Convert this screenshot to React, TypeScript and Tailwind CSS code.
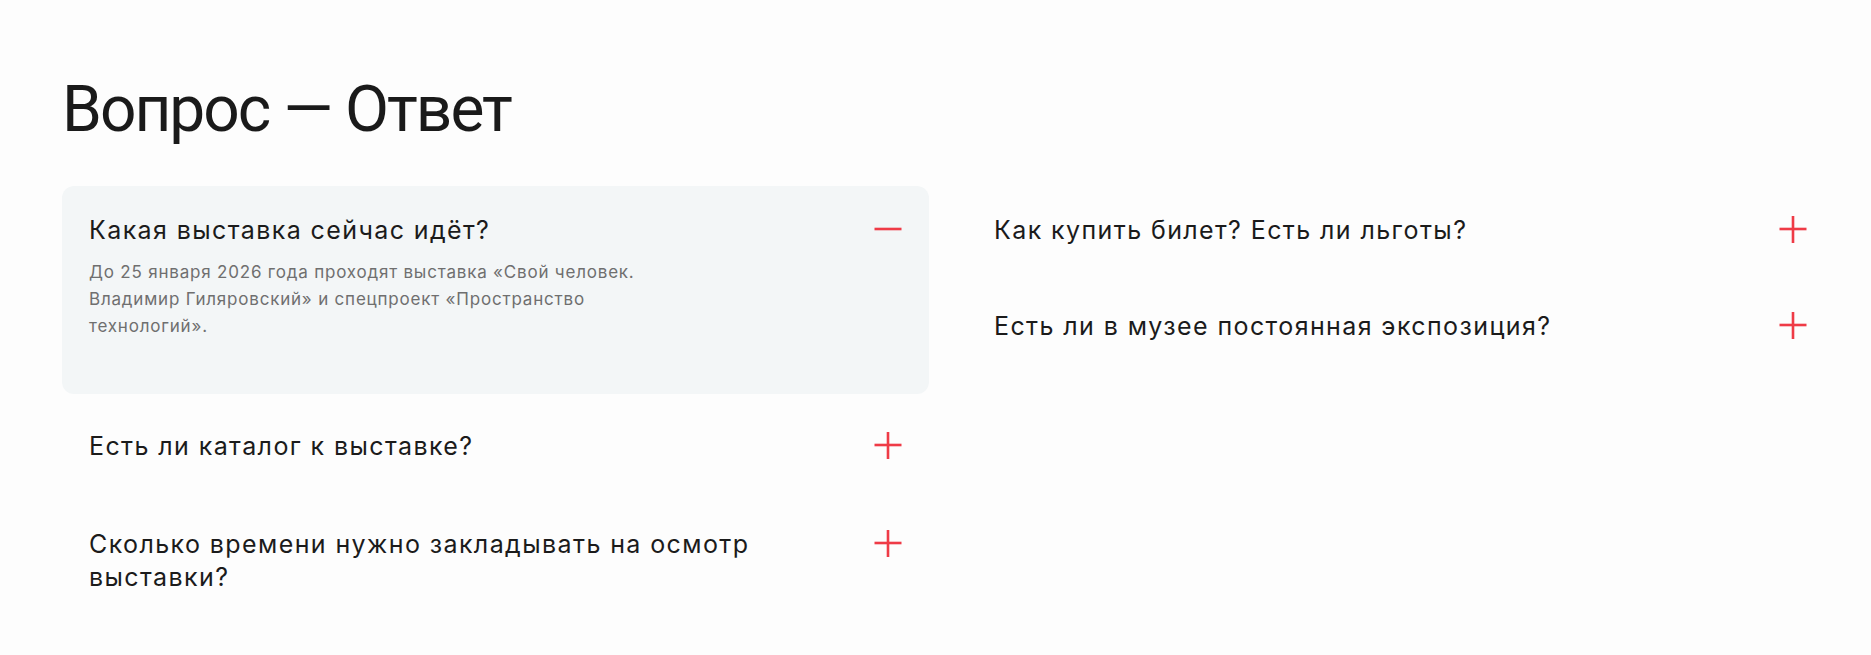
import React from "react";

type Item = { q: React.ReactNode; a?: React.ReactNode; open?: boolean };

const left: Item[] = [
  {
    q: "Какая выставка сейчас идёт?",
    a: (
      <>
        До 25 января 2026 года проходят выставка «Свой человек.
        <br />
        Владимир Гиляровский» и спецпроект «Пространство
        <br />
        технологий».
      </>
    ),
    open: true,
  },
  { q: "Есть ли каталог к выставке?" },
  {
    q: (
      <>
        Сколько времени нужно закладывать на осмотр
        <br />
        выставки?
      </>
    ),
  },
];

const right: Item[] = [
  { q: "Как купить билет? Есть ли льготы?" },
  { q: "Есть ли в музее постоянная экспозиция?" },
];

function Icon({ open }: { open?: boolean }) {
  return (
    <svg width="28" height="28" viewBox="0 0 28 28" className="shrink-0 mt-[2px]">
      <line x1="0.5" y1="13" x2="27.5" y2="13" stroke="#ef3b46" strokeWidth="2.6" />
      {!open && <line x1="14" y1="0" x2="14" y2="27" stroke="#ef3b46" strokeWidth="2.6" />}
    </svg>
  );
}

function FaqItem({ item }: { item: Item }) {
  return (
    <div
      className={
        "rounded-[12px] px-[27px] pt-[28px] " +
        (item.open ? "bg-[#f3f6f7] pb-[54px]" : "pb-[29px]")
      }
    >
      <div className="flex items-start justify-between gap-6">
        <div className="text-[25px] leading-[33px] text-[#1b1b1b] tracking-[1.4px]">{item.q}</div>
        <Icon open={item.open} />
      </div>
      {item.a && (
        <div className="mt-[12px] text-[17px] leading-[27px] text-[#6f6f6f] tracking-[0.8px]">
          {item.a}
        </div>
      )}
    </div>
  );
}

export default function App() {
  return (
    <div
      className="min-h-[655px] bg-[#fdfdfd] pl-[62px] pr-[37px] pt-[70px]"
      style={{ fontFamily: "Inter, 'Noto Sans', sans-serif" }}
    >
      <h1
        className="text-[64px] leading-[80px] font-normal text-[#1a1a1a] tracking-[-2px]"
        style={{ fontFamily: "Roboto, Inter, sans-serif" }}
      >
        Вопрос — Ответ
      </h1>
      <div className="mt-[36px] grid grid-cols-2 gap-x-[38px] items-start">
        <div className="flex flex-col gap-[8px]">
          {left.map((it, i) => (
            <FaqItem key={i} item={it} />
          ))}
        </div>
        <div className="flex flex-col gap-[6px]">
          {right.map((it, i) => (
            <FaqItem key={i} item={it} />
          ))}
        </div>
      </div>
    </div>
  );
}
